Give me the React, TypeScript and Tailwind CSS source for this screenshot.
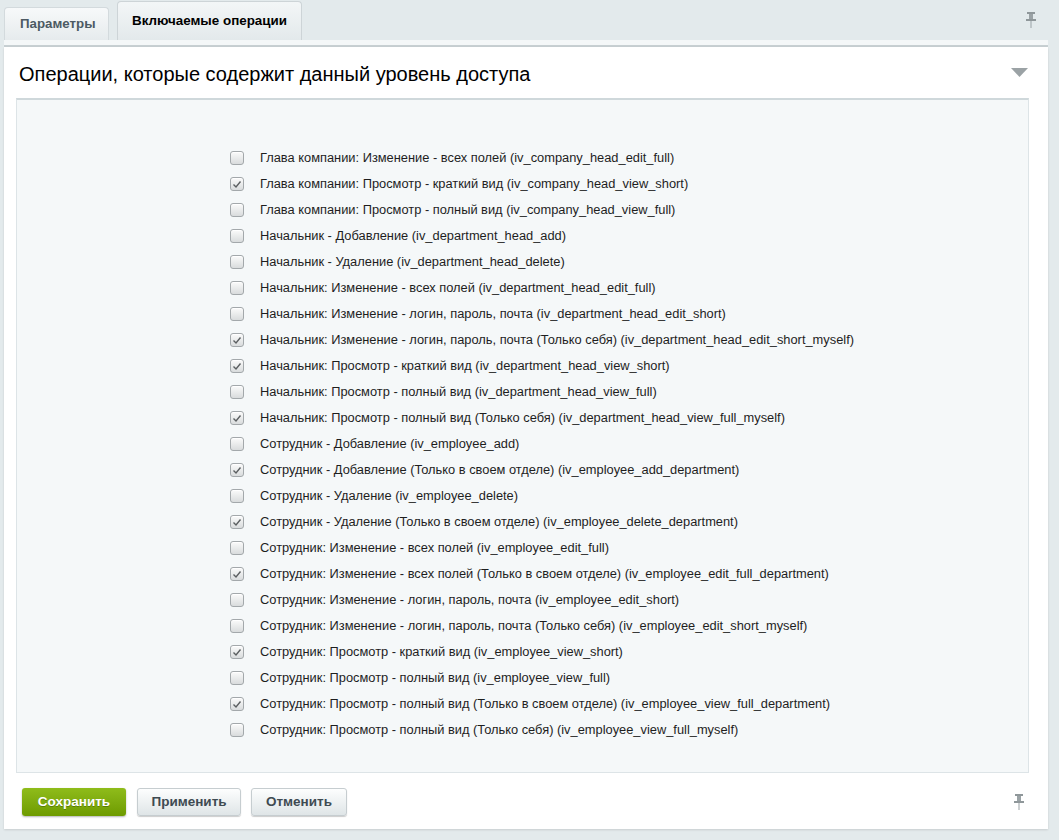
import React from "react";

const ops: [string, boolean][] = [
  ["Глава компании: Изменение - всех полей (iv_company_head_edit_full)", false],
  ["Глава компании: Просмотр - краткий вид (iv_company_head_view_short)", true],
  ["Глава компании: Просмотр - полный вид (iv_company_head_view_full)", false],
  ["Начальник - Добавление (iv_department_head_add)", false],
  ["Начальник - Удаление (iv_department_head_delete)", false],
  ["Начальник: Изменение - всех полей (iv_department_head_edit_full)", false],
  ["Начальник: Изменение - логин, пароль, почта (iv_department_head_edit_short)", false],
  ["Начальник: Изменение - логин, пароль, почта (Только себя) (iv_department_head_edit_short_myself)", true],
  ["Начальник: Просмотр - краткий вид (iv_department_head_view_short)", true],
  ["Начальник: Просмотр - полный вид (iv_department_head_view_full)", false],
  ["Начальник: Просмотр - полный вид (Только себя) (iv_department_head_view_full_myself)", true],
  ["Сотрудник - Добавление (iv_employee_add)", false],
  ["Сотрудник - Добавление (Только в своем отделе) (iv_employee_add_department)", true],
  ["Сотрудник - Удаление (iv_employee_delete)", false],
  ["Сотрудник - Удаление (Только в своем отделе) (iv_employee_delete_department)", true],
  ["Сотрудник: Изменение - всех полей (iv_employee_edit_full)", false],
  ["Сотрудник: Изменение - всех полей (Только в своем отделе) (iv_employee_edit_full_department)", true],
  ["Сотрудник: Изменение - логин, пароль, почта (iv_employee_edit_short)", false],
  ["Сотрудник: Изменение - логин, пароль, почта (Только себя) (iv_employee_edit_short_myself)", false],
  ["Сотрудник: Просмотр - краткий вид (iv_employee_view_short)", true],
  ["Сотрудник: Просмотр - полный вид (iv_employee_view_full)", false],
  ["Сотрудник: Просмотр - полный вид (Только в своем отделе) (iv_employee_view_full_department)", true],
  ["Сотрудник: Просмотр - полный вид (Только себя) (iv_employee_view_full_myself)", false],
];

function Pin() {
  return (
    <svg width="12" height="16" viewBox="0 0 12 16">
      <rect x="2" y="0" width="8" height="2" fill="#8f979a" />
      <rect x="4" y="2" width="4" height="5" fill="#9aa2a5" />
      <rect x="1" y="7" width="10" height="2" fill="#8f979a" />
      <rect x="5.5" y="9" width="1" height="7" fill="#9aa2a5" />
    </svg>
  );
}

function Checkbox({ checked }: { checked: boolean }) {
  return (
    <span className="flex h-[14px] w-[14px] shrink-0 items-center justify-center rounded-[3px] border border-[#a3a8ab] bg-gradient-to-b from-[#fbfbfb] to-[#d9dcdd] shadow-[inset_0_1px_0_#fff]">
      {checked && (
        <svg width="10" height="9" viewBox="0 0 10 9">
          <path d="M1.5 4.5 L4 7 L8.5 1.5" fill="none" stroke="#5b5f61" strokeWidth="1.4" />
        </svg>
      )}
    </span>
  );
}

export default function App() {
  return (
    <div
      className="min-h-[840px] w-full bg-[#e3eaec] pr-[11px] pl-[4px]"
      style={{ fontFamily: '"Liberation Sans", Arial, sans-serif' }}
    >
      <div className="flex h-[40px] items-end">
        <div className="flex h-[33px] w-[105px] items-center rounded-t-[4px] border border-b-0 border-[#d3dadd] bg-gradient-to-b from-[#f7f9fa] to-[#e6ebed] pl-[15px] text-[13.3px] font-bold text-[#4c5a63]">
          Параметры
        </div>
        <div className="ml-[8px] flex h-[39px] w-[185px] items-center rounded-t-[4px] border border-b-0 border-[#cdd4d7] bg-gradient-to-b from-[#f3f6f7] to-[#e3e9eb] pl-[14px] text-[13.4px] font-bold text-black">
          Включаемые операции
        </div>
        <div className="flex-1" />
        <div className="mr-[11px] mb-[12px]">
          <Pin />
        </div>
      </div>
      <div className="h-[5px] bg-[#f4f7f8]" />
      <div className="h-[2px] bg-[#c7cfd2]" />
      <div className="bg-white pb-[13px] shadow-[0_1px_2px_rgba(0,0,0,0.12)]">
        <div className="flex h-[51px] items-center justify-between pl-[15px] pr-[20px]">
          <div className="pt-[3px] text-[20px] text-black">Операции, которые содержит данный уровень доступа</div>
          <svg width="17" height="9" viewBox="0 0 17 9">
            <path d="M0 0 H17 L8.5 9 Z" fill="#9ba2a5" />
          </svg>
        </div>
        <div className="ml-[12px] mr-[19px] border border-t-2 border-[#dde4e7] border-t-[#cfd8db] bg-[#f5f8f9] pt-[45px] pb-[29px] pl-[213px]">
          {ops.map(([label, checked]) => (
            <div key={label} className="flex h-[26px] items-center">
              <Checkbox checked={checked} />
              <span className="ml-[16px] text-[12.85px] text-[#1e1e1e]">{label}</span>
            </div>
          ))}
        </div>
        <div className="mt-[15px] flex items-center pl-[18px] pr-[23px]">
          <button className="h-[28px] w-[104px] rounded-[3px] bg-gradient-to-b from-[#8fbc1a] to-[#6e9b00] text-[13.5px] font-bold text-white shadow-[0_1px_2px_rgba(0,0,0,0.3)] [text-shadow:0_1px_0_rgba(0,0,0,0.25)]">
            Сохранить
          </button>
          <button className="ml-[11px] h-[28px] w-[104px] rounded-[3px] border border-[#c6cdd0] bg-gradient-to-b from-[#fdfefe] to-[#dfe5e7] text-[13.5px] font-bold text-[#3f4b52] shadow-[0_1px_1px_rgba(0,0,0,0.2)]">
            Применить
          </button>
          <button className="ml-[10px] h-[28px] w-[96px] rounded-[3px] border border-[#c6cdd0] bg-gradient-to-b from-[#fdfefe] to-[#dfe5e7] text-[13.5px] font-bold text-[#3f4b52] shadow-[0_1px_1px_rgba(0,0,0,0.2)]">
            Отменить
          </button>
          <div className="flex-1" />
          <Pin />
        </div>
      </div>
    </div>
  );
}
